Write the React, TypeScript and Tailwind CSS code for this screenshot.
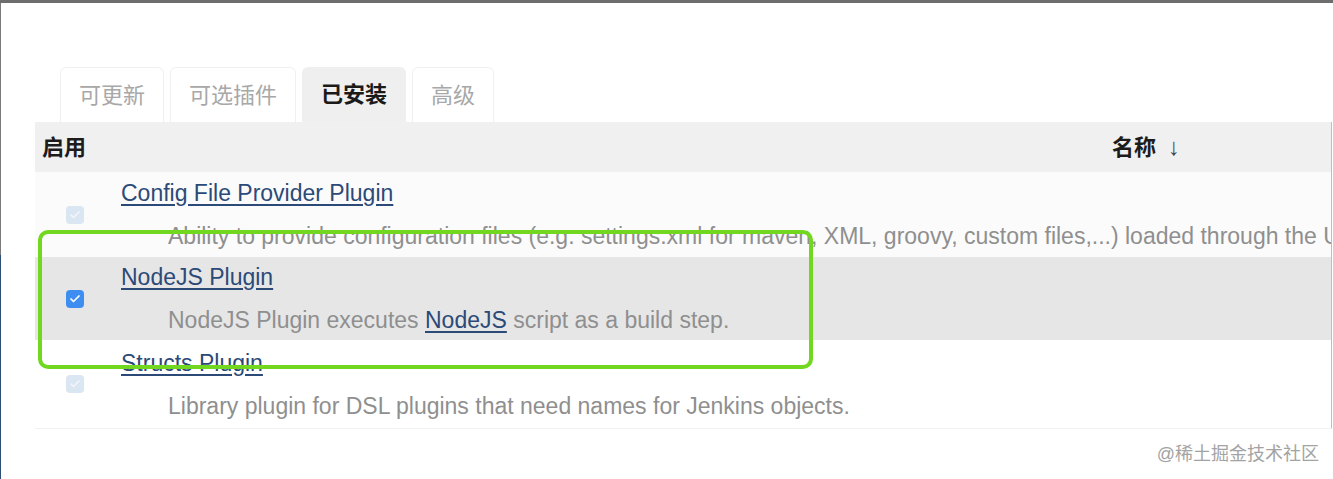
import { Check } from "lucide-react";

type PluginRowProps = {
  name: string;
  description: React.ReactNode;
  checked?: boolean;
  disabled?: boolean;
  rowClass: string;
};

const tabs = [
  { label: "可更新", active: false },
  { label: "可选插件", active: false },
  { label: "已安装", active: true },
  { label: "高级", active: false },
];

const PluginCheckbox = ({ checked, disabled }: { checked?: boolean; disabled?: boolean }) => {
  if (disabled) {
    return (
      <span className="flex h-[18px] w-[18px] items-center justify-center rounded-[4px] bg-[#dbe6f3]">
        <Check className="size-3 text-[#f2f6fb]" strokeWidth={3} />
      </span>
    );
  }
  return (
    <span
      className={
        checked
          ? "flex h-[18px] w-[18px] items-center justify-center rounded-[4px] bg-[#3d8ef0]"
          : "flex h-[18px] w-[18px] rounded-[4px] border border-gray-400 bg-white"
      }
    >
      {checked && <Check className="size-3 text-white" strokeWidth={3.5} />}
    </span>
  );
};

const PluginRow = ({ name, description, checked, disabled, rowClass }: PluginRowProps) => {
  return (
    <div className={`flex items-center overflow-hidden ${rowClass}`}>
      <div className="pl-[31px]">
        <PluginCheckbox checked={checked} disabled={disabled} />
      </div>
      <div className="ml-[37px] flex min-w-0 flex-col whitespace-nowrap">
        <a className="h-6 self-start leading-6 text-[#2c4a78] underline underline-offset-[3px]">{name}</a>
        <p className="mt-[19px] h-6 pl-[47px] leading-6 text-[#8f8f8f]">{description}</p>
      </div>
    </div>
  );
};

export default function App() {
  return (
    <div className="relative flex h-[479px] w-[1333px] overflow-hidden border-t-[3px] border-[#6d6d6d] bg-white font-['Liberation_Sans','Noto_Sans_CJK_SC',sans-serif] text-[23px]">
      <div className="w-px shrink-0 bg-[linear-gradient(to_bottom,#7a7a7a_0,#7a7a7a_252px,#2d4f73_252px)]" />
      <div className="flex min-w-0 flex-1 flex-col">
        <div className="mt-[64px] flex gap-[6px] pl-[59px]">
          {tabs.map((tab) => (
            <div
              key={tab.label}
              className={
                tab.active
                  ? "flex h-[55px] items-center rounded-t-[6px] bg-[#efefef] px-[19px] text-[22px] font-bold text-[#1a1a1a]"
                  : "flex h-[55px] items-center rounded-t-[6px] border border-b-0 border-[#f0f0f0] px-[18px] text-[22px] text-[#a8a8a8]"
              }
            >
              {tab.label}
            </div>
          ))}
        </div>

        <div className="ml-[34px] mr-[1px] border-b border-r border-[#f2f2f2] border-r-[#bdbdbd]">
          <div className="flex h-[50px] items-center bg-[#f0f0f0] text-[22px] font-bold text-[#1c1c1c]">
            <span className="w-[1077px] pl-[7px]">启用</span>
            <span>名称</span>
            <span className="ml-[12px] text-[24px] font-normal text-[#444]">↓</span>
          </div>
          <PluginRow
            name="Config File Provider Plugin"
            disabled
            rowClass="h-[85px] bg-[#fbfbfb]"
            description="Ability to provide configuration files (e.g. settings.xml for maven, XML, groovy, custom files,...) loaded through the UI"
          />
          <PluginRow
            name="NodeJS Plugin"
            checked
            rowClass="h-[83px] bg-[#e6e6e6]"
            description={
              <>
                NodeJS Plugin executes{" "}
                <a className="text-[#2c4a78] underline underline-offset-[3px]">NodeJS</a> script as a build
                step.
              </>
            }
          />
          <PluginRow
            name="Structs Plugin"
            disabled
            rowClass="h-[88px] bg-white"
            description="Library plugin for DSL plugins that need names for Jenkins objects."
          />
        </div>

        <div className="mt-[12px] pr-[14px] text-right text-[18px] text-[#a3a3a3]">@稀土掘金技术社区</div>
      </div>

      <div className="pointer-events-none absolute left-[38px] top-[227px] h-[139px] w-[775px] rounded-[10px] border-[4px] border-[#72d81f]" />
    </div>
  );
}
